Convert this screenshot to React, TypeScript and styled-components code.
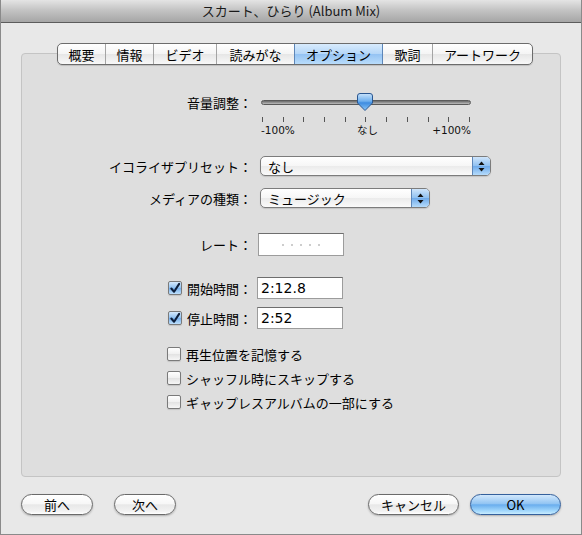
import React from 'react';
import styled, { createGlobalStyle, css } from 'styled-components';

const GlobalStyle = createGlobalStyle`
  html, body {
    margin: 0;
    padding: 0;
    background: #e8e8e8;
  }
  body {
    font-family: "Noto Sans CJK JP", "Noto Sans", "Liberation Sans", sans-serif;
    color: #000;
  }
  * { box-sizing: border-box; }
`;

const Window = styled.div`
  width: 582px;
  height: 535px;
  display: flex;
  flex-direction: column;
  background: #e8e8e8;
  border: 1px solid #8a8a8a;
  border-top: none;
`;

const TitleBar = styled.div`
  height: 23px;
  flex-shrink: 0;
  display: flex;
  align-items: center;
  justify-content: center;
  font-size: 13px;
  color: #1a1a1a;
  background: linear-gradient(#e4e4e4, #c4c4c4 45%, #a6a6a6);
  border-bottom: 1px solid #5c5c5c;
  padding-bottom: 1px;
`;

const Body = styled.div`
  flex: 1;
  display: flex;
  flex-direction: column;
  padding: 20px 20px 0 20px;
`;

const TabBar = styled.div`
  position: relative;
  z-index: 1;
  align-self: flex-start;
  margin-left: 36px;
  height: 22px;
  display: flex;
  border: 1px solid #6c6c6c;
  border-radius: 5px;
  overflow: hidden;
  background: linear-gradient(#ffffff, #f4f4f4 50%, #e6e6e6 51%, #f8f8f8);
  box-shadow: 0 1px 1px rgba(0, 0, 0, 0.15);
`;

const Tab = styled.div<{ $w: number; $active?: boolean }>`
  width: ${p => p.$w}px;
  display: flex;
  align-items: center;
  justify-content: center;
  font-size: 13px;
  line-height: 1;
  border-left: 1px solid #a4a4a4;
  &:first-child { border-left: none; }
  ${p => p.$active && css`
    background: linear-gradient(#d8ebfd, #b4d6f8 50%, #94c3f3 51%, #b9dcfb);
    border-left-color: #5d86b8;
    & + div { border-left-color: #5d86b8; }
  `}
`;

const Panel = styled.div`
  margin-top: -12px;
  height: 424px;
  background: #dedede;
  border: 1px solid #c4c4c4;
  border-radius: 4px;
  padding-top: 40px;
  display: flex;
  flex-direction: column;
`;

const Row = styled.div<{ $mt?: number; $h: number }>`
  display: grid;
  grid-template-columns: 230px 1fr;
  column-gap: 8px;
  align-items: center;
  height: ${p => p.$h}px;
  margin-top: ${p => p.$mt ?? 0}px;
`;

const Label = styled.div<{ $top?: boolean }>`
  display: flex;
  align-items: center;
  justify-content: flex-end;
  gap: 5px;
  font-size: 13px;
  white-space: nowrap;
  ${p => p.$top && css`
    align-self: start;
    height: 17px;
  `}
`;

const Control = styled.div<{ $ml?: number }>`
  margin-left: ${p => p.$ml ?? 0}px;
  display: flex;
  align-items: center;
`;

/* slider */
const Slider = styled.div`
  width: 210px;
  display: flex;
  flex-direction: column;
`;

const TrackArea = styled.div`
  position: relative;
  height: 17px;
  display: flex;
  align-items: center;
`;

const Track = styled.div`
  width: 100%;
  height: 5px;
  border-radius: 3px;
  background: linear-gradient(#6a6a6a, #9a9a9a 60%, #bdbdbd);
  border: 1px solid #5a5a5a;
`;

const Thumb = styled.svg`
  position: absolute;
  left: 96px;
  top: -1px;
`;

const Ticks = styled.div`
  margin-top: 6px;
  height: 5px;
  display: flex;
  justify-content: space-between;
  padding: 0 1px;
`;

const Tick = styled.div`
  width: 1px;
  height: 5px;
  background: #555;
`;

const ScaleLabels = styled.div`
  margin-top: 1px;
  display: flex;
  justify-content: space-between;
  font-size: 10.5px;
  line-height: 14px;
  font-family: "DejaVu Sans", "Noto Sans CJK JP", sans-serif;
  color: #111;
`;

/* popup button */
const Popup = styled.div<{ $w: number }>`
  width: ${p => p.$w}px;
  height: 20px;
  display: flex;
  border: 1px solid #7c7c7c;
  border-radius: 5px;
  overflow: hidden;
  background: linear-gradient(#ffffff, #f6f6f6 50%, #ebebeb 51%, #fafafa);
  box-shadow: 0 1px 1px rgba(0, 0, 0, 0.12);
`;

const PopupText = styled.div`
  flex: 1;
  display: flex;
  align-items: center;
  padding-left: 7px;
  font-size: 13px;
`;

const PopupArrows = styled.div`
  width: 18px;
  display: flex;
  align-items: center;
  justify-content: center;
  border-left: 1px solid #5d86b8;
  background: linear-gradient(#cfe5fb, #8ec0f1 50%, #6eaaea 51%, #b5dbfb);
`;

/* text fields */
const Field = styled.div<{ $h: number }>`
  width: 86px;
  height: ${p => p.$h}px;
  background: #fff;
  border: 1px solid #9c9c9c;
  border-top-color: #6e6e6e;
  display: flex;
  align-items: center;
  padding-left: 3px;
  font-size: 14px;
  font-family: "DejaVu Sans", "Liberation Sans", sans-serif;
`;

const RateDots = styled.div`
  width: 100%;
  display: flex;
  justify-content: center;
  gap: 7px;
  padding-right: 3px;
`;

const Dot = styled.div`
  width: 2px;
  height: 2px;
  border-radius: 1px;
  background: #bdbdbd;
`;

/* checkboxes */
const Box = styled.div<{ $checked?: boolean }>`
  width: 14px;
  height: 14px;
  flex-shrink: 0;
  border: 1px solid #7a7a7a;
  border-radius: 2px;
  display: flex;
  align-items: center;
  justify-content: center;
  background: ${p => p.$checked
    ? 'linear-gradient(#d6eafd, #8fc1f2 50%, #74aeec 51%, #bfe0fc)'
    : 'linear-gradient(#ffffff, #f0f0f0 50%, #e2e2e2 51%, #f6f6f6)'};
  box-shadow: 0 1px 1px rgba(0, 0, 0, 0.12);
`;

const CheckRow = styled.div<{ $mt: number }>`
  margin-top: ${p => p.$mt}px;
  margin-left: 145px;
  height: 16px;
  display: flex;
  align-items: center;
  gap: 5px;
  font-size: 13px;
`;

/* footer */
const Footer = styled.div`
  margin-top: 17px;
  display: flex;
  align-items: center;
`;

const Button = styled.div<{ $w: number; $ml?: number; $primary?: boolean }>`
  width: ${p => p.$w}px;
  margin-left: ${p => p.$ml ?? 0}px;
  height: 21px;
  border-radius: 11px;
  display: flex;
  align-items: center;
  justify-content: center;
  font-size: 13px;
  border: 1px solid ${p => (p.$primary ? '#34609c' : '#6a6a6a')};
  background: ${p => p.$primary
    ? 'linear-gradient(#d2e8fc, #93c5f3 45%, #6aaeee 52%, #a6dafd 85%, #c8ecff)'
    : 'linear-gradient(#ffffff, #f7f7f7 45%, #e8e8e8 52%, #f2f2f2 85%, #ffffff)'};
  box-shadow: 0 1px 2px rgba(0, 0, 0, 0.25);
`;

const Spacer = styled.div`
  flex: 1;
`;

const CheckMark = () => (
  <svg width="13" height="13" viewBox="0 0 13 13">
    <path d="M2.5 6.5 L5.5 10 L11 1.5" fill="none" stroke="#0d1e3a" strokeWidth="2.2" strokeLinecap="round" strokeLinejoin="round" />
  </svg>
);

const Checkbox = ({ checked }: { checked?: boolean }) => (
  <Box $checked={checked}>{checked && <CheckMark />}</Box>
);

const Arrows = () => (
  <svg width="7" height="11" viewBox="0 0 7 11">
    <path d="M3.5 0.5 L6.5 4 H0.5 Z" fill="#111" />
    <path d="M3.5 10.5 L6.5 7 H0.5 Z" fill="#111" />
  </svg>
);

const tabs = [
  { label: '概要', w: 47 },
  { label: '情報', w: 48 },
  { label: 'ビデオ', w: 63 },
  { label: '読みがな', w: 78 },
  { label: 'オプション', w: 88, active: true },
  { label: '歌詞', w: 50 },
  { label: 'アートワーク', w: 100 },
];

const App: React.FC = () => (
  <>
    <GlobalStyle />
    <Window>
      <TitleBar>スカート、ひらり (Album Mix)</TitleBar>
      <Body>
        <TabBar>
          {tabs.map(t => (
            <Tab key={t.label} $w={t.w} $active={t.active}>{t.label}</Tab>
          ))}
        </TabBar>
        <Panel>
          <Row $h={42}>
            <Label $top>音量調整：</Label>
            <Control $ml={1}>
              <Slider>
                <TrackArea>
                  <Track />
                  <Thumb width="16" height="18" viewBox="0 0 16 18">
                    <defs>
                      <linearGradient id="thumb" x1="0" y1="0" x2="0" y2="1">
                        <stop offset="0" stopColor="#c9e3fb" />
                        <stop offset="0.45" stopColor="#6fb0ee" />
                        <stop offset="0.55" stopColor="#3d8ce0" />
                        <stop offset="1" stopColor="#8cc8f8" />
                      </linearGradient>
                    </defs>
                    <path d="M3 0.5 H13 Q15.5 0.5 15.5 3 V10 L8 17.5 L0.5 10 V3 Q0.5 0.5 3 0.5 Z" fill="url(#thumb)" stroke="#2a568f" strokeWidth="1" />
                  </Thumb>
                </TrackArea>
                <Ticks>
                  {Array.from({ length: 11 }).map((_, i) => <Tick key={i} />)}
                </Ticks>
                <ScaleLabels>
                  <span>-100%</span>
                  <span style={{ fontFamily: '"Noto Sans CJK JP", sans-serif', paddingLeft: 8 }}>なし</span>
                  <span>+100%</span>
                </ScaleLabels>
              </Slider>
            </Control>
          </Row>

          <Row $h={20} $mt={20}>
            <Label>イコライザプリセット：</Label>
            <Control>
              <Popup $w={231}>
                <PopupText>なし</PopupText>
                <PopupArrows><Arrows /></PopupArrows>
              </Popup>
            </Control>
          </Row>

          <Row $h={20} $mt={12}>
            <Label>メディアの種類：</Label>
            <Control>
              <Popup $w={170}>
                <PopupText>ミュージック</PopupText>
                <PopupArrows><Arrows /></PopupArrows>
              </Popup>
            </Control>
          </Row>

          <Row $h={23} $mt={25}>
            <Label>レート：</Label>
            <Control $ml={-2}>
              <Field $h={23}>
                <RateDots>
                  {Array.from({ length: 5 }).map((_, i) => <Dot key={i} />)}
                </RateDots>
              </Field>
            </Control>
          </Row>

          <Row $h={22} $mt={21}>
            <Label><Checkbox checked />開始時間：</Label>
            <Control $ml={-3}>
              <Field $h={22}>2:12.8</Field>
            </Control>
          </Row>

          <Row $h={22} $mt={8}>
            <Label><Checkbox checked />停止時間：</Label>
            <Control $ml={-3}>
              <Field $h={22}>2:52</Field>
            </Control>
          </Row>

          <CheckRow $mt={17}><Checkbox />再生位置を記憶する</CheckRow>
          <CheckRow $mt={8}><Checkbox />シャッフル時にスキップする</CheckRow>
          <CheckRow $mt={8}><Checkbox />ギャップレスアルバムの一部にする</CheckRow>
        </Panel>

        <Footer>
          <Button $w={72}>前へ</Button>
          <Button $w={62} $ml={21}>次へ</Button>
          <Spacer />
          <Button $w={91}>キャンセル</Button>
          <Button $w={91} $ml={11} $primary>OK</Button>
        </Footer>
      </Body>
    </Window>
  </>
);

export default App;
